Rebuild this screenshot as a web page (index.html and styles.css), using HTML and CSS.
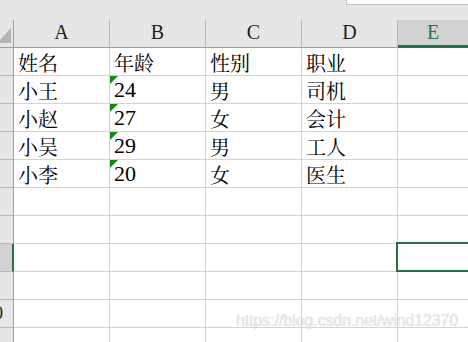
FILE: index.html
```html
<!DOCTYPE html>
<html lang="zh-CN">
<head>
    <meta charset="UTF-8">
    <title>工作表</title>
    <link rel="stylesheet" href="styles.css">
</head>
<body>
    <div class="topbar">
        <div class="namebox"></div>
    </div>

    <div class="sheet">
        <!-- 列标题 -->
        <div class="corner">
            <svg width="13" height="27" viewBox="0 0 13 27"><polygon points="11,8 11,23 0,23 0,20" fill="#b4b4b4"/></svg>
        </div>
        <div class="col-head">A</div>
        <div class="col-head">B</div>
        <div class="col-head">C</div>
        <div class="col-head">D</div>
        <div class="col-head active">E</div>

        <div class="row-head"><span>1</span></div>
        <div class="cell">姓名</div>
        <div class="cell">年龄</div>
        <div class="cell">性别</div>
        <div class="cell">职业</div>
        <div class="cell last"></div>

        <div class="row-head"><span>2</span></div>
        <div class="cell">小王</div>
        <div class="cell num flag">24</div>
        <div class="cell">男</div>
        <div class="cell">司机</div>
        <div class="cell last"></div>

        <div class="row-head"><span>3</span></div>
        <div class="cell">小赵</div>
        <div class="cell num flag">27</div>
        <div class="cell">女</div>
        <div class="cell">会计</div>
        <div class="cell last"></div>

        <div class="row-head"><span>4</span></div>
        <div class="cell">小吴</div>
        <div class="cell num flag">29</div>
        <div class="cell">男</div>
        <div class="cell">工人</div>
        <div class="cell last"></div>

        <div class="row-head"><span>5</span></div>
        <div class="cell">小李</div>
        <div class="cell num flag">20</div>
        <div class="cell">女</div>
        <div class="cell">医生</div>
        <div class="cell last"></div>

        <div class="row-head"><span>6</span></div>
        <div class="cell"></div>
        <div class="cell"></div>
        <div class="cell"></div>
        <div class="cell"></div>
        <div class="cell last"></div>

        <div class="row-head"><span>7</span></div>
        <div class="cell"></div>
        <div class="cell"></div>
        <div class="cell"></div>
        <div class="cell"></div>
        <div class="cell last"></div>

        <div class="row-head active"><span>8</span></div>
        <div class="cell"></div>
        <div class="cell"></div>
        <div class="cell"></div>
        <div class="cell"></div>
        <div class="cell last selected"></div>

        <div class="row-head"><span>9</span></div>
        <div class="cell"></div>
        <div class="cell"></div>
        <div class="cell"></div>
        <div class="cell"></div>
        <div class="cell last"></div>

        <div class="row-head"><span>10</span></div>
        <div class="cell"></div>
        <div class="cell"></div>
        <div class="cell"></div>
        <div class="cell"></div>
        <div class="cell last"></div>

        <div class="row-head"><span>11</span></div>
        <div class="cell"></div>
        <div class="cell"></div>
        <div class="cell"></div>
        <div class="cell"></div>
        <div class="cell last"></div>
    </div>

    <div class="watermark">https://blog.csdn.net/wind12370</div>
</body>
</html>
```

FILE: styles.css
```css
html, body {
    margin: 0;
    padding: 0;
    height: 100%;
    overflow: hidden;
}
body {
    background: #ffffff;
    font-family: 'Liberation Serif', 'Noto Serif CJK SC', 'Noto Sans CJK SC', serif;
    color: #000;
    position: relative;
}
.topbar {
    height: 20px;
    background: #e6e6e6;
    display: flex;
    justify-content: flex-end;
    align-items: flex-start;
}
.namebox {
    width: 122px;
    height: 5px;
    box-sizing: border-box;
    background: #fff;
    border-left: 1px solid #c6c6c6;
    border-bottom: 1px solid #c6c6c6;
}
.sheet {
    display: grid;
    grid-template-columns: 14px repeat(4, 96px) 1fr;
    grid-auto-rows: 28px;
}
.sheet > div {
    box-sizing: border-box;
}
.corner {
    background: #e6e6e6;
    border-right: 1px solid #9e9e9e;
    border-bottom: 1px solid #9e9e9e;
    overflow: hidden;
}
.corner svg {
    display: block;
}
.col-head {
    background: #e6e6e6;
    border-right: 1px solid #b8b8b8;
    border-bottom: 1px solid #9e9e9e;
    display: flex;
    justify-content: center;
    align-items: flex-end;
    padding-bottom: 3px;
    font-size: 20px;
    color: #1e1e1e;
}
.col-head.active {
    background: #d2d2d2;
    color: #217346;
    border-right: none;
    border-bottom-color: #217346;
    box-shadow: inset 0 -2px 0 #217346;
}
.row-head {
    background: #e6e6e6;
    border-right: 1px solid #9e9e9e;
    border-bottom: 1px solid #b8b8b8;
    overflow: hidden;
    display: flex;
    justify-content: flex-end;
    align-items: center;
    font-size: 18px;
    color: #1e1e1e;
}
.row-head span {
    flex: 0 0 38px;
    text-align: center;
}
.row-head.active {
    background: #d2d2d2;
    border-right: 2px solid #217346;
}
.cell {
    border-right: 1px solid #d4d4d4;
    border-bottom: 1px solid #d4d4d4;
    display: flex;
    align-items: flex-end;
    padding: 0 0 1px 4px;
    font-size: 20px;
    line-height: 1;
    white-space: nowrap;
    position: relative;
}
.cell.num {
    font-size: 22px;
    padding-bottom: 2px;
}
.cell.last {
    border-right: none;
}
.flag::before {
    content: "";
    position: absolute;
    top: 0;
    left: 0;
    border-top: 8px solid #108a10;
    border-right: 8px solid transparent;
}
.selected::after {
    content: "";
    position: absolute;
    top: -2px;
    left: -2px;
    right: -10px;
    bottom: -1px;
    border: 2px solid #217346;
}
.watermark {
    position: absolute;
    left: 236px;
    top: 312px;
    font-family: 'Liberation Sans', sans-serif;
    font-size: 15.8px;
    color: rgba(238, 238, 238, 0.85);
    text-shadow: 0 0 1px rgba(120, 120, 120, 0.4);
    white-space: nowrap;
}
```
